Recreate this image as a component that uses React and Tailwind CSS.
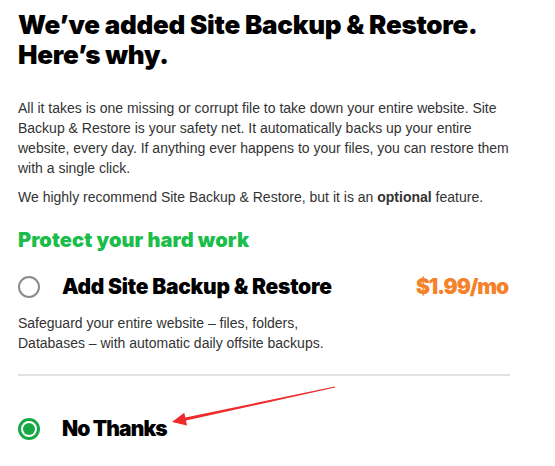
import React from "react";

function Radio({ checked }) {
  if (checked) {
    return (
      <div className="w-[22px] h-[22px] rounded-full border-[3px] border-[#17a843] flex items-center justify-center shrink-0">
        <div className="w-[12px] h-[12px] rounded-full bg-[#17a843]" />
      </div>
    );
  }
  return <div className="w-[22px] h-[22px] rounded-full border-2 border-[#8c8c8c] bg-white shrink-0" />;
}

export default function App() {
  const head = { fontFamily: "Inter, 'Noto Sans', sans-serif" };
  const body = { fontFamily: "'Liberation Sans', Arial, sans-serif" };
  return (
    <div className="relative w-[555px] h-[466px] bg-white overflow-hidden pl-[18px] pt-[10px]">
      <div className="w-[492px]">
        <h1 style={head} className="text-[26px] leading-[30px] font-black text-black tracking-[-0.25px]">
          We’ve added Site Backup &amp; Restore.
          <br />
          Here’s why.
        </h1>
        <p style={body} className="mt-[28px] text-[14px] leading-[20px] text-[#333]">
          All it takes is one missing or corrupt file to take down your entire website. Site Backup &amp; Restore is your safety net. It automatically backs up your entire website, every day. If anything ever happens to your files, you can restore them with a single click.
        </p>
        <p style={body} className="mt-[9px] text-[14px] leading-[20px] text-[#333]">
          We highly recommend Site Backup &amp; Restore, but it is an <b>optional</b> feature.
        </p>
        <h2 style={head} className="mt-[21px] text-[20px] leading-[24px] font-black text-[#1bbd4b] tracking-[0.1px]">
          Protect your hard work
        </h2>
        <div className="mt-[21px] flex items-center justify-between pr-[2px]">
          <div className="flex items-center gap-[22px]">
            <Radio checked={false} />
            <span style={head} className="text-[21px] leading-[28px] font-black text-black tracking-[-0.25px]">
              Add Site Backup &amp; Restore
            </span>
          </div>
          <span style={head} className="text-[21px] leading-[28px] font-black text-[#f4822a] tracking-[-1.1px]">
            $1.99/mo
          </span>
        </div>
        <p style={body} className="mt-[12px] text-[14px] leading-[20px] text-[#333]">
          Safeguard your entire website – files, folders,
          <br />
          Databases – with automatic daily offsite backups.
        </p>
        <div className="mt-[21px] h-[2px] bg-[#e3e3e3]" />
        <div className="mt-[39px] flex items-center gap-[22px]">
          <Radio checked />
          <span style={head} className="text-[21px] leading-[28px] font-black text-black tracking-[-0.9px]">
            No Thanks
          </span>
        </div>
      </div>
      <svg className="absolute left-0 top-0 pointer-events-none" width="555" height="466" viewBox="0 0 555 466">
        <polygon
          points="172,422 187,425.5 186,420.6 335.2,387.4 334.8,386.6 185.4,417.6 184.2,412.8"
          fill="#f02a2a"
        />
      </svg>
    </div>
  );
}
